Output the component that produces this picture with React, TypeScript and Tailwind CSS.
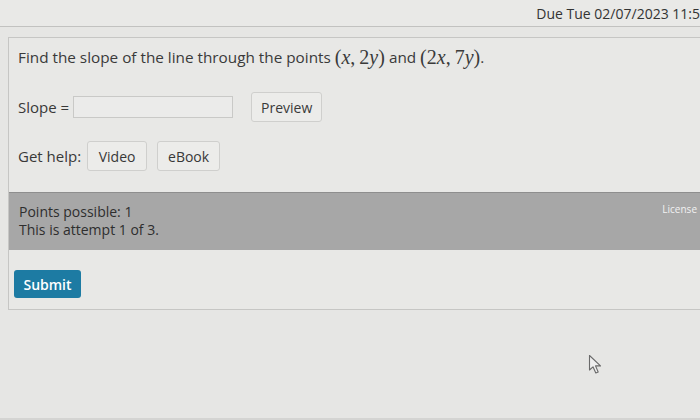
import React from "react";

const font = { fontFamily: '"Open Sans", "Noto Sans", sans-serif' };

function M({ children }: { children: React.ReactNode }) {
  return (
    <span className="text-[20px] leading-[20px]" style={{ fontFamily: '"Liberation Serif", "DejaVu Serif", serif' }}>
      {children}
    </span>
  );
}

export default function App() {
  return (
    <div className="relative h-[420px] w-[700px] overflow-hidden bg-[#e6e6e4] text-[#383838]" style={font}>
      {/* header */}
      <div className="flex h-[27px] items-center justify-end overflow-hidden whitespace-nowrap border-b border-[#c2c2c0] bg-[#e9e9e7] text-[14px] text-[#333]">
        <span>Due Tue 02/07/2023 11:5</span>
      </div>

      {/* question box */}
      <div className="ml-[8px] mt-[10px] flex h-[273px] flex-col border-b border-l border-t border-[#c6c6c4] bg-[#e8e8e6]">
        <div className="flex h-[38px] items-center pl-[9px] text-[15.3px] text-[#3a3a3a]">
          <span>Find the slope of the line through the points&nbsp;</span>
          <M>
            (<i>x</i>,&thinsp;2<i>y</i>)
          </M>
          <span>&nbsp;and&nbsp;</span>
          <M>
            (2<i>x</i>,&thinsp;7<i>y</i>)
          </M>
          <span>.</span>
        </div>

        <div className="mt-[16px] flex items-center pl-[9px] text-[15px]">
          <span>Slope =</span>
          <div className="ml-[4px] h-[22px] w-[160px] border border-[#c9c9c7] bg-[#ebebea]" />
          <div className="ml-[18px] flex h-[30px] w-[71px] items-center justify-center rounded-[3px] border border-[#cfcfcd] bg-[#ececea] text-[14px] text-[#3a3a3a]">
            Preview
          </div>
        </div>

        <div className="mt-[19px] flex items-center pl-[9px] text-[15px]">
          <span>Get help:</span>
          <div className="ml-[6px] flex h-[30px] w-[60px] items-center justify-center rounded-[3px] border border-[#cfcfcd] bg-[#ececea] text-[14px]">
            Video
          </div>
          <div className="ml-[10px] flex h-[30px] w-[63px] items-center justify-center rounded-[3px] border border-[#cfcfcd] bg-[#ececea] text-[14px]">
            eBook
          </div>
        </div>

        <div className="mt-[21px] flex h-[58px] items-start justify-between border-t border-[#8e8e8e] bg-[#a7a7a7] pl-[10px] pr-[3px] pt-[10px] text-[14px] leading-[18px] text-[#2e2e2e]">
          <div>
            <div>Points possible: 1</div>
            <div>This is attempt 1 of 3.</div>
          </div>
          <div className="pt-[0px] text-[10px] leading-[12px] text-[#f2f2f2]">License</div>
        </div>

        <div className="mt-[20px] pl-[5px]">
          <div className="flex h-[28px] w-[67px] items-center justify-center rounded-[3px] bg-[#1d7ba3] text-[14px] font-semibold text-white">
            Submit
          </div>
        </div>
      </div>

      <div className="absolute bottom-0 left-0 h-[2px] w-full bg-[#d4d4d2]" />

      {/* mouse cursor */}
      <svg className="absolute left-[588px] top-[354px]" width="16" height="22" viewBox="0 0 16 22">
        <path
          d="M1.5 1.5 L1.5 16 L5 12.8 L7.8 19 L10.2 18 L7.5 11.9 L12.5 11.9 Z"
          fill="#efefef"
          stroke="#6a6a6a"
          strokeWidth="1.1"
          strokeLinejoin="round"
        />
      </svg>
    </div>
  );
}
